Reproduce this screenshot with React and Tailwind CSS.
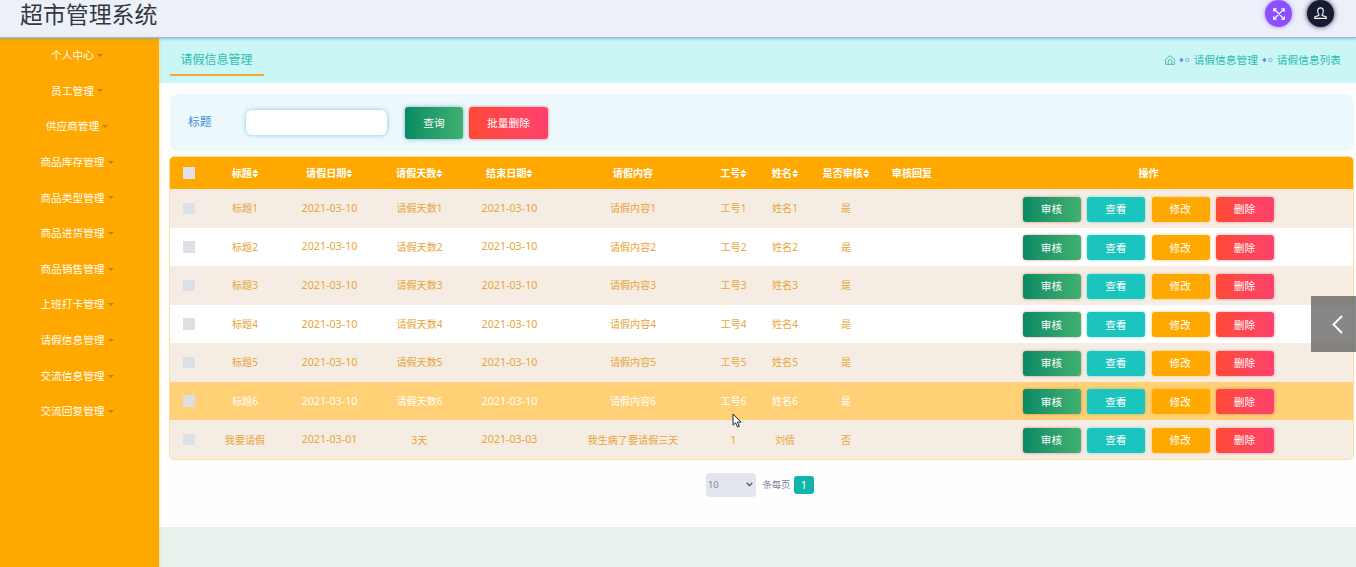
import React from "react";

const menu = [
  "个人中心",
  "员工管理",
  "供应商管理",
  "商品库存管理",
  "商品类型管理",
  "商品进货管理",
  "商品销售管理",
  "上班打卡管理",
  "请假信息管理",
  "交流信息管理",
  "交流回复管理",
];

const columns = [
  { label: "标题", sort: true },
  { label: "请假日期", sort: true },
  { label: "请假天数", sort: true },
  { label: "结束日期", sort: true },
  { label: "请假内容", sort: false },
  { label: "工号", sort: true },
  { label: "姓名", sort: true },
  { label: "是否审核", sort: true },
  { label: "审核回复", sort: false },
  { label: "操作", sort: false },
];

const rows = [1, 2, 3, 4, 5, 6]
  .map((n) => [`标题${n}`, "2021-03-10", `请假天数${n}`, "2021-03-10", `请假内容${n}`, `工号${n}`, `姓名${n}`, "是", ""])
  .concat([["我要请假", "2021-03-01", "3天", "2021-03-03", "我生病了要请假三天", "1", "刘倩", "否", ""]]);

const grid =
  "grid grid-cols-[38px_74px_95px_85px_95px_152px_49px_54px_68px_64px_409px] items-center text-center whitespace-nowrap";

function SortIcon() {
  return (
    <svg width="6.5" height="9" viewBox="0 0 6.5 9" className="shrink-0">
      <path d="M3.25 0.3 6.4 3.9H0.1zM3.25 8.7 0.1 5.1h6.3z" fill="#fff" />
    </svg>
  );
}

function Separator() {
  return (
    <svg width="11" height="6" viewBox="0 0 11 6" className="mx-[4px]">
      <path d="M2.4 0.8 4.6 3 2.4 5.2 0.2 3z" fill="#5f8fdc" />
      <circle cx="8.4" cy="3" r="1.7" fill="none" stroke="#6f9be0" strokeWidth=".8" />
    </svg>
  );
}

function Checkbox({ tone }) {
  return <span className={`mx-auto block h-[11.5px] w-[11.5px] ${tone}`} />;
}

const btn =
  "flex h-[25px] w-[57.8px] items-center justify-center rounded-[3px] pt-[1px] pr-[1px] text-[10.7px] leading-none text-white";

function Actions() {
  return (
    <div className="flex justify-center gap-[6.5px] pt-[1.6px]">
      <button className={`${btn} bg-linear-to-r from-[#058a63] to-[#3fb171] shadow-[0_0_3px_rgba(200,60,60,0.55)]`}>审核</button>
      <button className={`${btn} bg-[#1bc5bd] shadow-[0_0_3px_rgba(27,197,189,0.6)]`}>查看</button>
      <button className={`${btn} bg-[#ffa800] shadow-[0_0_3px_rgba(255,168,0,0.6)]`}>修改</button>
      <button className={`${btn} bg-linear-to-r from-[#ff4a34] to-[#ff416c] shadow-[0_0_3px_rgba(255,65,90,0.6)]`}>删除</button>
    </div>
  );
}

export default function App() {
  return (
    <div className="relative flex h-[567px] w-[1356px] flex-col overflow-hidden bg-[#e8f1ec] font-['Noto_Sans','Noto_Sans_CJK_SC',sans-serif] text-[10.1px] leading-none">
      <header className="z-10 flex h-[38px] shrink-0 items-start justify-between border-b border-[#a3b9cb] bg-[#ecf0f9] pl-[20px] pr-[22px] shadow-[0_1px_3px_rgba(70,160,220,0.55)]">
        <h1 className="pt-[3px] text-[22.9px] leading-[24px] text-[#34383d]">超市管理系统</h1>
        <div className="flex gap-[15px]">
          <button className="flex h-[27px] w-[27px] items-center justify-center rounded-full bg-[#8950fc] shadow-[0_0_4px_rgba(137,80,252,0.7)]">
            <svg width="12" height="12" viewBox="0 0 12 12" fill="none" stroke="#fff" strokeWidth="1.1">
              <path d="M1 1l10 10M11 1 1 11M.7 3.8V.7h3.1M8.2.7h3.1v3.1M11.3 8.2v3.1H8.2M3.8 11.3H.7V8.2" />
            </svg>
          </button>
          <button className="flex h-[27px] w-[27px] items-center justify-center rounded-full bg-[#181c32] shadow-[0_0_5px_rgba(24,28,50,0.9)]">
            <svg width="13" height="13" viewBox="0 0 13 13" fill="none" stroke="#fff" strokeWidth="1.1">
              <path d="M4.8 7.3C3.9 6.6 3.7 5.2 3.7 3.9 3.7 2 4.8.9 6.5.9s2.8 1.1 2.8 3c0 1.3-.2 2.7-1.1 3.4v1.2l3.4 1.1c.5.2.7.6.7 1.1v.7H.7v-.7c0-.5.2-.9.7-1.1l3.4-1.1z" />
            </svg>
          </button>
        </div>
      </header>

      <div className="flex min-h-0 flex-1">
        <nav className="z-[1] w-[159px] shrink-0 bg-[#ffa800] shadow-[0_0_3px_rgba(255,190,60,0.5)]">
          {menu.map((m) => (
            <a key={m} className="flex h-[35.65px] items-center justify-center pr-[5px] pb-[1px] text-[10.7px] text-[#fffdf5]">
              {m}
              <svg width="6" height="3" viewBox="0 0 6 3" className="ml-[3px]">
                <path d="M0 0h6L3 3z" fill="#b98218" />
              </svg>
            </a>
          ))}
        </nav>

        <main className="min-w-0 flex-1">
          <div className="flex h-[44.5px] justify-between bg-[#caf6f5] pr-[15px] pl-[11px]">
            <div className="mt-[7px] h-[31px] w-[94px] border-b-2 border-[#f0a92c] pr-px text-center text-[12px] leading-[30px] text-[#2fbdb2]">
              请假信息管理
            </div>
            <div className="flex items-center text-[10.7px] text-[#2bbcb0]">
              <svg width="10" height="10" viewBox="0 0 10 10" fill="none" stroke="#43b9a8" strokeWidth=".9">
                <path d="M.7 4.4 5 .6l4.3 3.8v5H.7zM3.3 9.4V6.2a1.7 1.7 0 0 1 3.4 0v3.2" />
              </svg>
              <Separator />
              <span>请假信息管理</span>
              <Separator />
              <span>请假信息列表</span>
            </div>
          </div>

          <div className="h-[444.5px] bg-[#fefefe] pt-[11px] pr-[2px] pl-[10px]">
            <form className="ml-px flex h-[57.5px] items-center rounded-[8px] bg-[#ecf8fb] pl-[18px]">
              <label className="w-[58px] text-[11.7px] text-[#3f8fd8]">标题</label>
              <input className="h-[25px] w-[141px] rounded-[6px] bg-white shadow-[0_0_4px_rgba(90,170,240,0.7)] outline-none" />
              <button
                type="button"
                className="mt-[2px] ml-[18px] flex h-[32px] w-[58px] items-center justify-center rounded-[3px] bg-linear-to-r from-[#058a63] to-[#3fb171] pt-[1px] text-[10.7px] text-white shadow-[0_0_4px_rgba(60,130,200,0.6)]"
              >
                查询
              </button>
              <button
                type="button"
                className="mt-[2px] ml-[6px] flex h-[32px] w-[79px] items-center justify-center rounded-[3px] bg-linear-to-r from-[#ff4a34] to-[#ff416c] pt-[1px] text-[10.7px] text-white shadow-[0_0_3px_rgba(255,65,90,0.7)]"
              >
                批量删除
              </button>
            </form>

            <section className="mt-[5px] overflow-hidden rounded-[5px] border border-[#ffdf9c]">
              <div className={`${grid} h-[32px] bg-[#ffa800] font-bold text-white`}>
                <Checkbox tone="bg-[#e1e2e9]" />
                {columns.map((c) => (
                  <div key={c.label} className="flex items-center justify-center">
                    {c.label}
                    {c.sort && <SortIcon />}
                  </div>
                ))}
              </div>
              {rows.map((r, i) => (
                <div
                  key={i}
                  className={`${grid} h-[38.55px] ${
                    i === 5 ? "bg-[#ffd075] text-white" : i % 2 ? "bg-white text-[#e8a537]" : "bg-[#f5ede4] text-[#e8a537]"
                  }`}
                >
                  <Checkbox tone={i === 5 ? "bg-[#dddde2]" : i % 2 ? "bg-[#dde0e5]" : "bg-[#dce0e8]"} />
                  {r.map((v, j) => (
                    <div key={j} className={j === 1 || j === 3 ? "text-[10.7px]" : ""}>
                      {v}
                    </div>
                  ))}
                  <Actions />
                </div>
              ))}
            </section>

            <div className="mt-[13px] ml-[537px] flex items-center text-[9.3px] text-[#7e8299]">
              <div className="flex h-[24px] w-[50px] items-center justify-between rounded-[4px] bg-[#e4e6ef] pr-[3px] pl-[2px]">
                <span>10</span>
                <svg width="7" height="5" viewBox="0 0 7 5" fill="none" stroke="#5d6170" strokeWidth="1.4">
                  <path d="M.7.8 3.5 3.7 6.3.8" />
                </svg>
              </div>
              <span className="ml-[6.5px]">条每页</span>
              <span className="ml-[3.5px] flex h-[18px] w-[20px] items-center justify-center rounded-[3px] bg-[#12b5ab] text-[10px] text-white">1</span>
            </div>
          </div>
        </main>
      </div>

      <div className="absolute top-[296px] right-0 z-20 flex h-[56px] w-[45px] items-center justify-center bg-[#464646]/65 pl-[7px]">
        <svg width="11" height="19" viewBox="0 0 11 19" fill="none" stroke="#fff" strokeWidth="2">
          <path d="M10 1 1.5 9.5 10 18" />
        </svg>
      </div>

      <svg width="10" height="15" viewBox="0 0 10 15" className="absolute top-[413px] left-[732px] z-20">
        <path d="M1 1v11.2l2.6-2.4 1.9 4.2 1.8-.8-1.9-4.1H9z" fill="#fff" stroke="#222539" strokeWidth="1" />
      </svg>
    </div>
  );
}
